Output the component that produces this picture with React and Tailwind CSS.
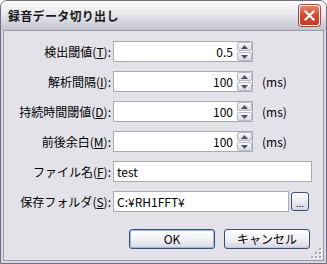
import React from "react";

const font = { fontFamily: '"Noto Sans CJK JP", "Liberation Sans", sans-serif' };

// underlined access key label, e.g. 検出閾値(T):
const Label = ({ text, k }) => (
  <div className="w-[108px] shrink-0 pr-[2px] text-right text-[12px] leading-[21px] text-black whitespace-nowrap">
    {text}(<span className="underline">{k}</span>):
  </div>
);

const Spin = () => (
  <div className="flex flex-col gap-[1px] w-[15px] h-[19px]">
    <div className="flex-1 flex items-center justify-center rounded-[2px] border border-[#B5B9C7] bg-linear-to-b from-[#FAFAFC] to-[#D9DAE3]">
      <svg width="7" height="4" viewBox="0 0 7 4"><path d="M0 4 L3.5 0 L7 4 Z" fill="#4D5266" /></svg>
    </div>
    <div className="flex-1 flex items-center justify-center rounded-[2px] border border-[#B5B9C7] bg-linear-to-b from-[#FAFAFC] to-[#D9DAE3]">
      <svg width="7" height="4" viewBox="0 0 7 4"><path d="M0 0 L3.5 4 L7 0 Z" fill="#4D5266" /></svg>
    </div>
  </div>
);

const SpinRow = ({ label, k, value, unit }) => (
  <div className="flex items-center h-[21px]">
    <Label text={label} k={k} />
    <div className="flex items-center w-[140px] h-[21px] border border-[#A5ACB5] bg-white">
      <div className="flex-1 text-right pr-[4px] text-[12px] leading-[19px]">{value}</div>
      <Spin />
    </div>
    {unit && <div className="ml-[9px] text-[12px] leading-[21px]">(ms)</div>}
  </div>
);

const Btn = ({ children, focus }) => (
  <button
    className={`w-[86px] h-[20px] rounded-[3px] border border-[#3E4F73] bg-linear-to-b from-[#FFFFFF] via-[#F1F1F5] to-[#D6D6E0] text-[12px] leading-[16px] ${
      focus ? "shadow-[inset_0_0_0_1px_#9DB8E6]" : "shadow-[inset_0_-1px_0_#C5C5D2]"
    }`}
  >
    {children}
  </button>
);

export default function App() {
  return (
    <div className="w-[327px] h-[264px] flex flex-col rounded-t-[7px] border border-[#6F6F80] bg-[#D8D7E2] overflow-hidden" style={font}>
      <div className="h-[29px] shrink-0 flex items-center justify-between pl-[7px] pr-[6px] bg-linear-to-b from-[#FFFFFF] via-[#E4E4EA] to-[#C4C3D2]">
        <span className="text-[12px] font-bold text-[#1A1A1A] tracking-[0.3px]">録音データ切り出し</span>
        <div className="w-[21px] h-[21px] rounded-[3px] border border-white bg-linear-to-b from-[#E8826A] via-[#D24A30] to-[#C53A22] flex items-center justify-center shadow-[0_0_0_1px_#9C4C48]">
          <svg width="11" height="11" viewBox="0 0 11 11">
            <path d="M1.5 1.5 L9.5 9.5 M9.5 1.5 L1.5 9.5" stroke="white" strokeWidth="2.2" strokeLinecap="square" />
          </svg>
        </div>
      </div>
      <div className="flex-1 mx-[2px] mb-[2px] border border-[#9C9BAE] bg-[#E3E2E8] relative flex flex-col pt-[10px] pl-[1px]">
        <div className="flex flex-col gap-[9px]">
          <SpinRow label="検出閾値" k="T" value="0.5" />
          <SpinRow label="解析間隔" k="I" value="100" unit />
          <SpinRow label="持続時間閾値" k="D" value="100" unit />
          <SpinRow label="前後余白" k="M" value="100" unit />
          <div className="flex items-center h-[21px]">
            <Label text="ファイル名" k="F" />
            <div className="w-[199px] h-[21px] border border-[#A5ACB5] bg-white pl-[3px] text-[12px] leading-[19px]">test</div>
          </div>
          <div className="flex items-center h-[21px]">
            <Label text="保存フォルダ" k="S" />
            <div className="w-[176px] h-[21px] border border-[#A5ACB5] bg-white pl-[3px] text-[12px] leading-[19px]">C:¥RH1FFT¥</div>
            <button className="ml-[2px] w-[18px] h-[19px] rounded-[3px] border border-[#3E4F73] bg-linear-to-b from-[#FFFFFF] to-[#D6D6E0] text-[9px] leading-[10px] pt-[4px]">...</button>
          </div>
        </div>
        <div className="flex justify-end gap-[9px] mt-[17px] pr-[13px]">
          <Btn focus>OK</Btn>
          <Btn>キャンセル</Btn>
        </div>
        <svg className="absolute right-[1px] bottom-[1px]" width="11" height="11" viewBox="0 0 11 11">
          {[[8, 0], [8, 4], [4, 4], [8, 8], [4, 8], [0, 8]].map(([x, y], i) => (
            <g key={i}>
              <rect x={x + 1} y={y + 1} width="2" height="2" fill="#FFFFFF" />
              <rect x={x} y={y} width="2" height="2" fill="#A9A8B8" />
            </g>
          ))}
        </svg>
      </div>
    </div>
  );
}
